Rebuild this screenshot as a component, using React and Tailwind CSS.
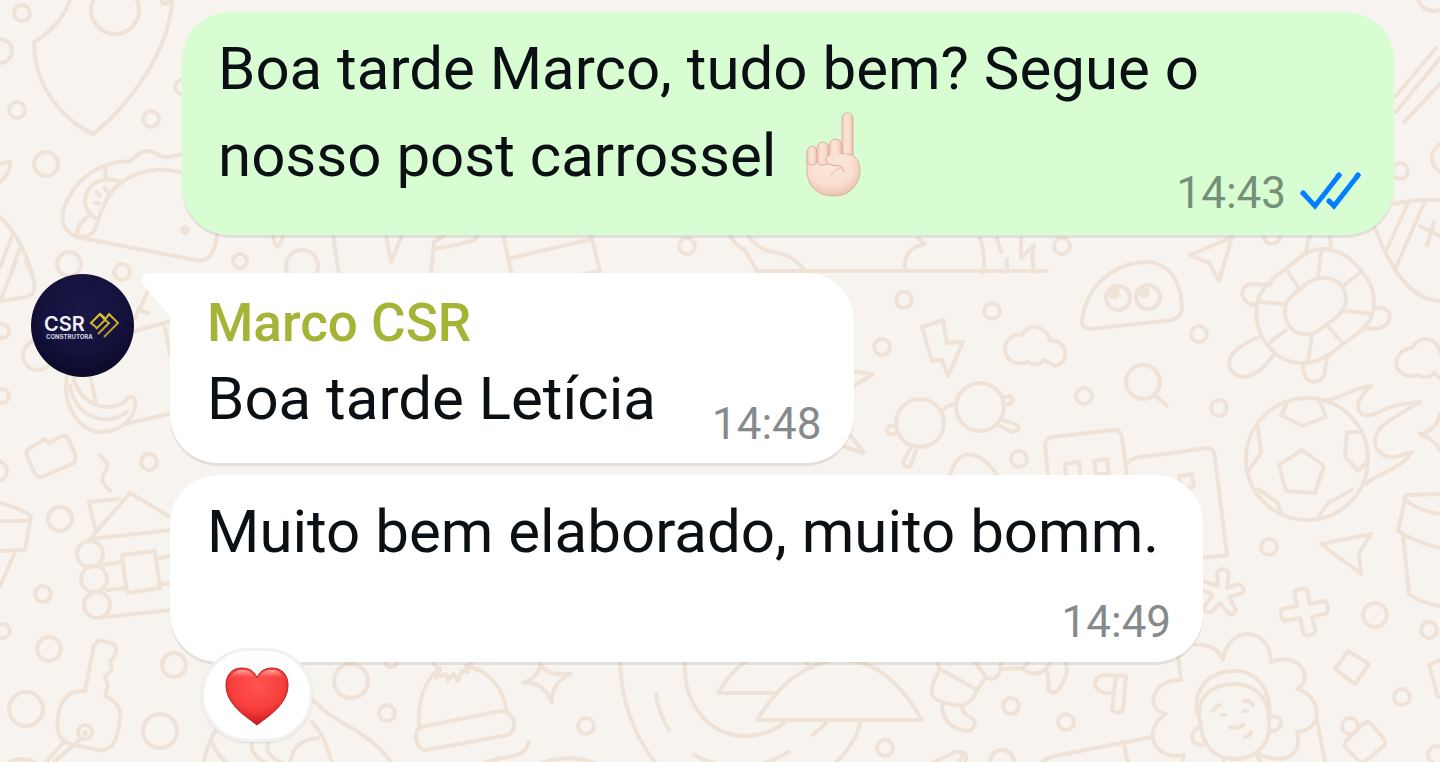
const CIRCLES = [
  [22, 13, 8], [0, 51, 12], [17, 110, 8], [151, 119, 8], [46, 164, 12], [182, 87, 7], [115, 10, 24],
  [69, 264, 12], [122, 272, 8], [240, 261, 7], [302, 266, 16], [687, 246, 8], [2, 331, 7], [38, 355, 15],
  [2, 396, 7], [149, 462, 8], [-3, 471, 10], [60, 519, 12], [43, 594, 8], [3, 631, 7], [49, 649, 12],
  [26, 709, 17], [160, 731, 17], [174, 665, 12], [90, 554, 13], [94, 579, 13], [97, 605, 13], [85, 732, 7],
  [1062, 246, 8], [904, 300, 8], [882, 347, 8], [992, 311, 8], [1084, 396, 8], [1019, 459, 8],
  [1118, 298, 12], [1148, 297, 12], [1143, 382, 17], [920, 423, 24], [980, 407, 24], [1272, 236, 8],
  [1199, 334, 8], [1219, 408, 8], [1307, 459, 61], [1269, 547, 8], [1375, 615, 12], [1429, 630, 8],
  [1402, 697, 8], [1350, 726, 8], [1437, 755, 9], [1400, 171, 8], [351, 681, 17], [387, 713, 8],
  [391, 660, 7], [586, 726, 8], [885, 748, 8], [1011, 706, 8], [1066, 722, 8], [1002, 762, 12],
  [1448, 158, 16], [165, 1, 3],
];

const DOTS = [[185, 230, 5], [1114, 293, 6], [1144, 292, 6], [85, 733, 3]];

const STROKES = [
  // shield, leaf and taco
  'M70 0C62 22 48 34 34 42C34 85 60 118 93 134C130 105 170 50 172 0',
  'M0 164L10 162Q11 172 0 182M0 217Q20 235 32 272M12 236L0 268M20 248L11 272',
  'M77 237C60 230 60 215 66 203C76 180 95 168 110 164C125 158 125 165 132 160C142 148 150 150 157 154C166 160 170 156 184 154',
  'M77 237C100 237 94 225 102 210C112 180 145 162 184 173M77 237L190 259C210 265 215 252 217 235',
  'M107 165Q104 172 106 178M119 181C100 175 85 185 85 203Q86 212 98 220M90 215Q77 222 77 237M96 192l4 4M104 188l4 4M95 203h4',
  // strip under the first message
  'M273 235Q277 258 283 235M333 235L339 275M386 235L391 262L402 235M431 275L434 242L445 235M434 249Q455 246 475 240L477 235',
  'M503 235L512 275M511 258L592 239M591 235L600 271L580 275M730 235Q736 247 744 249L757 271H1047M748 235C765 262 785 243 804 270',
  'M905 271Q902 248 925 244L918 238M983 273Q986 255 980 238M1001 252L997 238M1007 272V259M1021 238V258L1034 245L1032 257L1034 272',
  // bottle, banana, camera, squiggle
  'M0 301L16 262M26 262C36 280 39 294 26 297L0 301',
  'M67 376C62 405 78 432 103 432C125 430 137 415 135 400Q131 393 126 400C115 412 80 412 72 372M70 385C74 417 106 428 127 412M90 375L96 403M125 424L172 413',
  'M135 318L150 287M135 331L168 322M165 328L170 355M138 310L148 313',
  'M30 448L45 439L49 443L60 437Q67 434 69 440L75 454Q77 461 72 464L44 476Q38 479 35 474L27 456Q25 451 30 448Z',
  'M99 455Q110 462 106 470Q100 479 104 484L110 491',
  // bucket, cabin, key
  'M0 503Q20 508 31 516L25 550L0 551M0 521H30M15 552L0 586',
  'M89 540L130 493L172 518M95 528L89 502L119 499M90 539L172 530M122 555L155 551L160 588L127 593ZM103 565L122 562M107 590L127 588M158 558L172 556M162 584L172 583M105 617L172 610',
  'M85 691L94 645Q97 640 103 641Q117 643 116 650Q115 658 110 661L112 669L105 677L108 685L105 696C118 702 122 710 120 719C117 742 112 752 98 750L70 744C58 740 56 730 58 718C60 698 70 690 85 691',
  'M82 738L54 762M63 743L46 762M6 764Q22 754 38 764',
  // bolt, cloud, ghost, magnifier, glasses
  'M922 327L943 320L947 343L963 342L948 376L942 360L932 361Z',
  'M1022 335C1027 322 1047 325 1050 341C1066 338 1072 362 1055 366L1044 360C1040 366 1032 365 1028 362C1008 368 1000 350 1008 340Q1014 333 1022 335Z',
  'M1082 320C1086 290 1110 262 1148 262C1175 264 1182 290 1182 310Q1180 318 1172 320L1090 329Q1081 328 1082 320ZM1155 395L1167 406',
  'M943 410Q948 404 956 405M896 426Q885 425 887 432Q890 436 898 433M911 448L903 462Q906 470 911 465L916 450M1003 398Q1012 394 1013 400Q1012 405 1003 404M1002 420L1017 425Q1022 430 1012 432L998 425',
  'M850 371L873 374L850 388M850 435L864 453L845 447M950 476C958 445 980 450 998 476',
  // buildings
  'M1048 476L1045 444Q1046 438 1053 437L1114 430Q1121 430 1122 438L1127 476M1066 476L1065 464L1079 462L1080 476M1094 461L1107 459L1109 474L1096 474Z',
  'M1128 462Q1132 457 1150 456L1207 448Q1214 448 1215 458L1227 555L1200 558M1179 476L1192 474L1194 487L1181 488Z',
  // paper planes and turtle
  'M1233 237L1190 255L1209 263L1219 281L1232 237M1321 544L1371 534L1359 553L1361 574Z',
  'M1257 304C1260 282 1290 268 1305 253C1330 242 1350 255 1362 272C1378 290 1378 315 1362 330L1330 354C1310 368 1285 365 1272 350C1257 335 1255 318 1257 304Z',
  'M1286 303Q1290 296 1305 285C1322 271 1346 278 1346 300C1346 312 1335 318 1322 328C1305 342 1280 332 1286 303Z',
  'M1288 272L1300 290M1321 252L1318 278M1362 271L1343 286M1346 311L1372 314M1328 326L1342 343M1312 336L1308 362M1286 330L1270 342M1260 302L1286 304',
  'M1270 285L1250 284C1238 288 1240 304 1256 305M1375 308C1396 304 1396 334 1365 328M1261 336C1240 345 1225 355 1230 368C1238 384 1258 378 1274 354M1303 365C1302 388 1325 385 1325 370L1327 356M1306 255Q1307 240 1311 235M1330 250Q1332 243 1329 235',
  // beach ball and clouds on the right edge
  'M1394 204Q1415 199 1440 200M1375 228C1390 268 1410 300 1440 301M1408 203L1386 251M1425 201L1396 267M1420 226L1440 236M1434 222L1427 245',
  'M1396 112L1440 58M1396 96L1436 48M1404 122L1440 84M1418 0Q1424 14 1440 10',
  'M1412 348C1418 335 1436 336 1440 352M1412 348C1392 350 1390 376 1412 376L1417 375Q1428 380 1434 373L1440 378',
  // football with flames
  'M1302 450L1279 465L1286 491L1315 493L1324 466ZM1288 401L1281 415L1302 426L1326 417L1320 401M1258 427L1261 453L1249 470M1360 432H1347L1345 456L1358 471L1367 462M1258 489L1277 502L1282 515M1320 515L1328 503L1352 490',
  'M1325 401C1345 397 1352 388 1371 386C1350 405 1357 420 1375 414C1395 404 1402 404 1420 402C1385 422 1370 430 1376 448C1388 465 1402 454 1412 452C1400 470 1380 472 1366 484',
  'M1440 413Q1438 430 1420 434Q1435 440 1440 450',
  // coffee cup, asterisk, plus, diamonds
  'M1440 494L1406 495L1398 531Q1415 542 1440 548M1404 498Q1415 510 1440 514M1403 535L1409 594Q1420 603 1440 606',
  'M1218 586L1217 573Q1223 565 1229 573L1227 588L1238 584Q1246 587 1243 593L1229 597L1236 610Q1233 617 1228 613L1220 603L1211 612Q1203 613 1204 607L1213 595L1201 589M1200 580L1217 586',
  'M1294 592Q1300 587 1307 590L1310 604L1325 601Q1330 606 1327 613L1312 617L1316 631Q1312 637 1304 635L1300 618L1284 621Q1279 616 1282 609L1297 606Z',
  'M1348 651L1369 664L1355 684L1335 669ZM1440 660L1429 665L1438 697M1363 724Q1368 720 1372 725L1384 739Q1387 744 1382 747L1362 764L1346 748Q1343 744 1347 740Z',
  // portrait
  'M1195 645Q1215 643 1223 660C1227 625 1270 625 1271 662C1300 650 1315 680 1297 689C1322 695 1325 730 1297 732C1302 752 1290 762 1270 758L1258 754M1178 655L1181 680C1150 680 1145 710 1166 714C1140 730 1155 762 1184 755L1182 764',
  'M1200 722C1196 700 1208 684 1235 684C1262 685 1270 705 1269 725C1270 750 1250 759 1235 759C1212 759 1203 745 1200 722ZM1198 715C1192 690 1208 671 1235 671C1260 671 1272 695 1269 718',
  'M1201 727C1188 730 1190 746 1202 745M1270 716Q1282 716 1281 724Q1278 732 1270 731M1213 711Q1216 705 1220 705M1244 701Q1250 700 1253 705M1222 715h3M1244 711h3M1230 727Q1237 729 1243 725M1245 737Q1250 736 1251 732M1317 720L1325 762M1224 760V764M1256 754L1262 764',
  // beanie and star
  'M419 726C417 690 432 674 440 668M470 667C490 672 505 690 506 712M421 727L500 711Q510 710 514 722Q515 732 508 735L426 750Q418 750 416 738Q415 730 421 727ZM434 664L440 670L436 678L446 674L448 680L454 674L458 681L462 671L468 672L466 666L472 664',
  'M313 700C335 725 370 730 392 764M203 764C210 735 215 730 222 726M212 742Q218 758 230 764M312 722Q325 735 332 764M318 738Q292 740 290 764M252 744Q250 756 268 764M268 744Q264 756 285 764M486 762C510 755 525 758 529 742',
  'M541 664Q545 676 571 674Q551 682 552 702Q542 680 523 683Q538 678 541 664Z',
  // record and umbrellas
  'M620 662Q622 720 656 764M685 662C683 705 710 736 745 736Q770 735 785 722M656 694Q658 712 669 730M694 755Q740 780 789 752M813 735L826 723M835 764Q858 740 860 722M540 764Q568 752 597 764',
  'M757 720H922C880 646 830 650 790 680Q775 692 757 720ZM745 662Q730 672 718 693H777M805 662L812 668',
  // crab, screw, folder
  'M937 662L940 669L977 690Q970 708 955 705C930 701 925 695 940 669M975 662L986 677L977 690M986 677Q1000 684 1001 662M1002 669L1022 668Q1032 678 1044 670L1050 664M1046 669Q1050 678 1048 690Q1058 700 1067 672L1066 662M1028 662L1024 668',
  'M942 702Q942 730 970 731Q980 722 970 717Q960 712 963 705M1112 693H1104Q1093 688 1095 682Q1098 675 1105 675L1126 676L1123 710Q1118 716 1112 710L1116 676M1040 764Q1045 757 1060 755L1152 737M1124 744L1128 764M930 764L955 752Q970 750 965 764M958 764L963 755',
];

function Wallpaper() {
  return (
    <svg
      className="absolute inset-0 h-full w-full"
      viewBox="0 0 1440 762"
      preserveAspectRatio="xMidYMid slice"
      fill="none"
      stroke="#efe3d7"
      strokeWidth="4"
      strokeLinecap="round"
      strokeLinejoin="round"
      aria-hidden="true"
    >
      {STROKES.map((d) => <path key={d} d={d} />)}
      {CIRCLES.map(([x, y, r]) => <circle key={`${x}-${y}`} cx={x} cy={y} r={r} />)}
      {DOTS.map(([x, y, r]) => <circle key={`${x}-${y}`} cx={x} cy={y} r={r} fill="#efe3d7" stroke="none" />)}
    </svg>
  );
}

function PointingUp() {
  return (
    <svg className="ml-[14px] inline-block h-[86px] w-14 align-[-22px]" viewBox="0 0 56 86" role="img" aria-label="☝🏻">
      <defs>
        <linearGradient id="skin" x1="0" y1="0" x2="1" y2="0">
          <stop offset="0" stopColor="#f0cbb9" />
          <stop offset="0.35" stopColor="#fae3d5" />
          <stop offset="0.7" stopColor="#f8dccd" />
          <stop offset="1" stopColor="#e6b9a6" />
        </linearGradient>
        <radialGradient id="palm" cx="0.45" cy="0.35" r="0.7">
          <stop offset="0" stopColor="#fbe5d9" />
          <stop offset="0.6" stopColor="#f9dfd1" />
          <stop offset="1" stopColor="#e8bba8" />
        </radialGradient>
      </defs>
      <g stroke="#dfb09e" strokeWidth="1">
        <path d="M37 50V7Q37 1 42 1Q48 1 48 7V50Z" fill="url(#skin)" />
        <path d="M2 45C3 34 14 42 24 42L44 42C52 44 55 51 55 59C54 74 44 84 29 84C12 84 3 74 2 60Z" fill="url(#palm)" />
        <path d="M24 47V33Q25 27 31 27Q37 28 37 34V47Z" fill="url(#skin)" />
        <path d="M12 48V36Q13 30 18 30Q24 31 24 37V48Q23 53 18 53Q12 53 12 48Z" fill="url(#skin)" />
        <path d="M2 47V40Q3 34 8 34Q12 35 12 41V48Q12 53 7 53Q2 53 2 47Z" fill="url(#skin)" />
      </g>
      <path d="M25 43Q20 44 21 48Q22 53 28 53L35 54Q39 56 39 60" fill="#fae2d5" stroke="#dba795" strokeWidth="1" />
      <path d="M25 43Q38 40 48 45L45 56L28 52L22 48Z" fill="#fae2d5" />
      <path d="M38 55Q29 58 26 64" fill="none" stroke="#ebc4b2" strokeWidth="2" opacity="0.6" />
    </svg>
  );
}

function Heart() {
  return (
    <svg className="h-[60px] w-16" viewBox="0 0 64 60" role="img" aria-label="❤️">
      <defs>
        <radialGradient id="heart" cx="0.5" cy="0.3" r="0.7">
          <stop offset="0" stopColor="#ff5552" />
          <stop offset="0.6" stopColor="#f83f3d" />
          <stop offset="1" stopColor="#c9191c" />
        </radialGradient>
        <linearGradient id="shine" x1="0" y1="0" x2="0" y2="1">
          <stop offset="0" stopColor="#ffb3aa" />
          <stop offset="1" stopColor="#ff5552" stopOpacity="0" />
        </linearGradient>
      </defs>
      <path d="M32 58C22 50 1 38 1 18C1 7 8 1 17 1C25 1 30 5 32 11C34 5 39 1 47 1C56 1 63 7 63 18C63 38 42 50 32 58Z" fill="url(#heart)" stroke="#b92020" strokeWidth="1" />
      <path d="M5 12C7 5 12 3 17 3C24 3 28 6 30 12Q18 8 5 12ZM34 12C36 6 40 3 47 3C53 3 57 6 59 12Q46 8 34 12Z" fill="url(#shine)" />
    </svg>
  );
}

function ReadTicks() {
  return (
    <svg className="h-11 w-[62px]" viewBox="0 0 62 44" fill="none" stroke="#027eff" strokeWidth="5" role="img" aria-label="Lida">
      <path d="M2 21L15 35L40 3M28 29L34 35L59 3" strokeLinejoin="miter" strokeLinecap="butt" />
      <path d="M3 22L4 23M39 4L38 5M58 4L57 5M29 30L30 31" strokeLinecap="round" />
    </svg>
  );
}

function Avatar() {
  return (
    <svg className="mt-px h-[103px] w-[103px] shrink-0 rounded-full" viewBox="0 0 103 103" role="img" aria-label="CSR Construtora">
      <defs>
        <radialGradient id="navy" cx="0.5" cy="0.35" r="0.7">
          <stop offset="0" stopColor="#1b1747" />
          <stop offset="0.6" stopColor="#14113b" />
          <stop offset="1" stopColor="#090824" />
        </radialGradient>
        <linearGradient id="gold" x1="0" y1="0" x2="0.4" y2="1">
          <stop offset="0" stopColor="#e3d622" />
          <stop offset="1" stopColor="#b58a3c" />
        </linearGradient>
      </defs>
      <rect width="103" height="103" fill="url(#navy)" />
      <text className="font-['Inter',sans-serif]">
        <tspan x="13" y="57" fill="#eef0f8" className="text-[20px] font-semibold">CSR</tspan>
        <tspan x="15" y="65" fill="#d5d6e4" className="text-[6px] font-bold">CONSTRUTORA</tspan>
      </text>
      <path d="M66 54L60 49L69 40L74 46L78 40L87 49L73 63M65 55L74 46L78 49L67 60M69 40L74 44" fill="none" stroke="url(#gold)" strokeWidth="2" />
    </svg>
  );
}

export default function App() {
  return (
    <main className="relative min-h-screen overflow-hidden bg-[#f7f3ee] pt-3 pb-24 font-['Roboto',sans-serif] text-[60px] leading-[87px] text-[#0a1014]">
      <Wallpaper />

      <div className="relative flex flex-col">
        {/* Sent message */}
        <article className="mr-[46px] ml-[182px] flex flex-col rounded-[48px] bg-[#d8fdd2] pt-[13px] pr-8 pb-4 pl-9 shadow-[0_3px_0_rgba(0,0,0,0.08)]">
          <p className="max-w-[1040px]">
            Boa tarde Marco, tudo bem? Segue o nosso post carrossel <PointingUp />
          </p>
          <div className="-mt-8 flex items-center gap-[14px] self-end">
            <time className="text-[44px] leading-[52px] text-[#758f78]">14:43</time>
            <ReadTicks />
          </div>
        </article>

        {/* Received messages */}
        <div className="mt-[38px] flex items-start gap-9 pl-[31px]">
          <Avatar />
          <article className="relative rounded-[48px] rounded-tl-none bg-white pt-[18px] pr-8 pb-[13px] pl-[37px] shadow-[0_3px_0_rgba(0,0,0,0.08)]">
            <svg className="absolute top-0 -left-7 h-[44px] w-[29px]" viewBox="0 0 29 44" aria-hidden="true">
              <path d="M29 44L2 13Q-1 8 1 4Q3 0 8 0H29Z" fill="#fff" />
            </svg>
            <h2 className="text-[53px] leading-[64px] font-medium text-[#a5b337]">Marco CSR</h2>
            <div className="flex items-end gap-14">
              <p className="pb-2">Boa tarde Letícia</p>
              <time className="text-[44px] leading-[52px] text-[#868a8d]">14:48</time>
            </div>
          </article>
        </div>

        <article className="relative mt-3 mr-8 ml-[170px] flex w-fit flex-col rounded-[48px] bg-white pt-[13px] pr-11 pb-[14px] pl-[37px] shadow-[0_3px_0_rgba(0,0,0,0.08)]">
          <p>Muito bem elaborado, muito bomm.</p>
          <time className="mt-[21px] -mr-3 block self-end text-[44px] leading-[52px] text-[#868a8d]">14:49</time>
          <button
            type="button"
            aria-label="Reação"
            className="absolute -bottom-20 left-[31px] flex h-[94px] w-28 items-center justify-center rounded-[48px] border-3 border-[#f1f1f0] bg-white pt-1 shadow-[0_1px_2px_rgba(0,0,0,0.1)]"
          >
            <Heart />
          </button>
        </article>
      </div>
    </main>
  );
}
